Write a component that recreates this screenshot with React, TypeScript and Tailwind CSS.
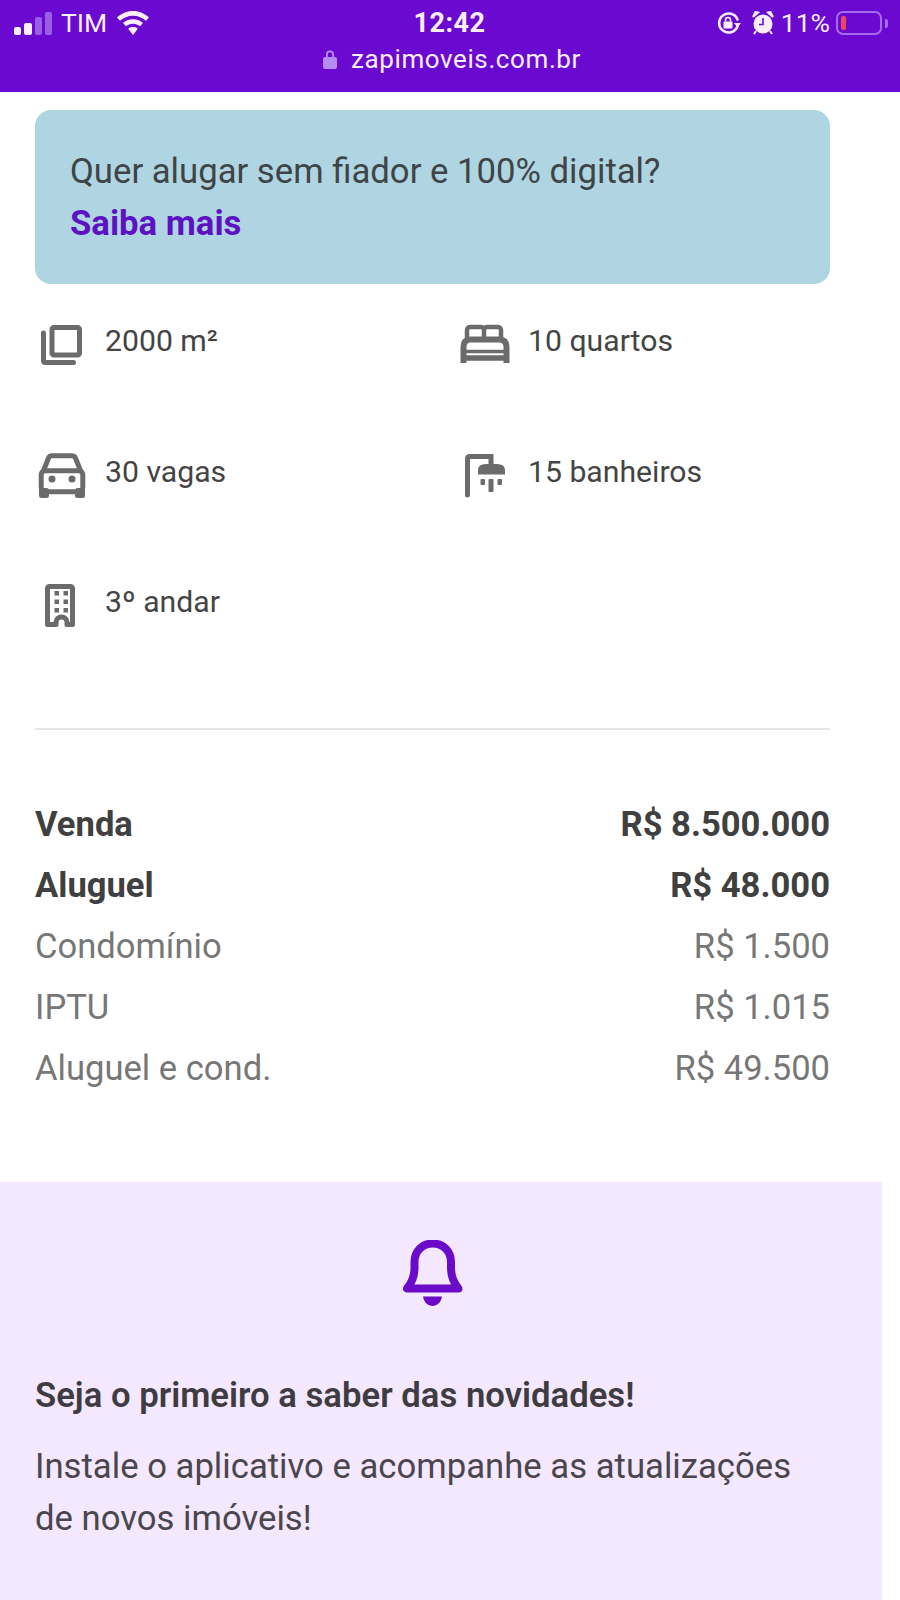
import React from "react";

const iconClass = "shrink-0 w-[56px] h-[56px] text-[#6b6b6b]";

const AreaIcon = () => (
  <svg viewBox="0 0 56 56" className={iconClass} fill="none" stroke="currentColor" strokeWidth="5" strokeLinecap="round" strokeLinejoin="round">
    <rect x="17" y="10.500" width="27.500" height="27.500" rx="2" />
    <path d="M8.500 16v27.500q0 2 2 2h28" />
  </svg>
);

const BedIcon = () => (
  <svg viewBox="0 0 56 56" className={iconClass} fill="none" stroke="currentColor">
    <path strokeWidth="4.500" d="M7 22V13a3 3 0 0 1 3-3h11a3 3 0 0 1 3 3v8M24 21v-8a3 3 0 0 1 3-3h11a3 3 0 0 1 3 3v9" />
    <path strokeWidth="6" d="M3.500 46V30q0-7.500 7-7.500h29q7 0 7 7.500v16" />
    <path strokeWidth="3.500" d="M3 34.500h44" />
    <path strokeWidth="5.500" d="M3 41h44" />
  </svg>
);

const CarIcon = () => (
  <svg viewBox="0 0 56 56" className={iconClass} fill="none" stroke="currentColor">
    <path strokeWidth="5" d="M8 24 13.500 10Q14.500 7.800 17 7.800H37Q39.500 7.800 40.500 10L46 24" />
    <rect x="6.200" y="22.700" width="41.600" height="21" rx="4" strokeWidth="5" />
    <rect x="4" y="40" width="10" height="10" rx="2.500" fill="currentColor" stroke="none" />
    <rect x="40" y="40" width="10" height="10" rx="2.500" fill="currentColor" stroke="none" />
    <circle cx="17" cy="31" r="3.500" fill="currentColor" stroke="none" />
    <circle cx="37" cy="31" r="3.500" fill="currentColor" stroke="none" />
  </svg>
);

const ShowerIcon = () => (
  <svg viewBox="0 0 56 56" className={iconClass} fill="none" stroke="currentColor">
    <path strokeWidth="5" strokeLinecap="round" d="M7.500 47V11Q7.500 8.500 10 8.500H31V17" />
    <path fill="currentColor" stroke="none" d="M18 26.500V22Q18 16 26 16H37Q45 16 45 22V26.500Z" />
    <rect x="20.500" y="31" width="4.500" height="6" rx="1" fill="currentColor" stroke="none" />
    <rect x="28.500" y="31" width="5" height="13" rx="1" fill="currentColor" stroke="none" />
    <rect x="37.500" y="31" width="4.500" height="6" rx="1" fill="currentColor" stroke="none" />
  </svg>
);

const BuildingIcon = () => (
  <svg viewBox="0 0 56 56" className={iconClass} fill="none" stroke="currentColor">
    <path strokeWidth="5" strokeLinejoin="round" d="M21 46.500H12.500V10.500a2 2 0 0 1 2-2H35.500a2 2 0 0 1 2 2v36h-5.500V44.500a5.500 5.500 0 0 0-11 0z" />
    <g fill="currentColor" stroke="none">
      <rect x="19.500" y="13" width="4.500" height="4.500" />
      <rect x="28.500" y="13" width="4.500" height="4.500" />
      <rect x="19.500" y="21.500" width="4.500" height="4.500" />
      <rect x="28.500" y="21.500" width="4.500" height="4.500" />
      <rect x="19.500" y="30" width="4.500" height="4.500" />
      <rect x="28.500" y="30" width="4.500" height="4.500" />
    </g>
  </svg>
);

const BellIcon = () => (
  <svg viewBox="0 0 60 67" className="w-[60px] h-[67px] text-[#6a0bca]">
    <path d="M4 48.500H55.500C50 42 48 36 48 28V22C48 11 40 3.500 29.750 3.500C19.500 3.500 11.500 11 11.500 22V28C11.500 36 9.500 42 4 48.500Z" fill="none" stroke="currentColor" strokeWidth="8" strokeLinejoin="round" />
    <path d="M20 56.500H39C38 62.500 34 66 29.500 66C25 66 21 62.500 20 56.500Z" fill="currentColor" />
  </svg>
);

const Feature = ({ icon, label, width }: { icon: React.ReactNode; label: string; width: string }) => (
  <div className="flex items-start h-[130.5px]">
    <div className={`${width} pt-px`}>{icon}</div>
    <span className="text-[30.2px] leading-[50px] text-[#444444]">{label}</span>
  </div>
);

const PriceRow = ({ label, value, strong }: { label: string; value: string; strong?: boolean }) => (
  <div className={`flex justify-between items-center h-[61px] text-[34.6px] ${strong ? "font-bold text-[#404040]" : "text-[#777777]"}`}>
    <span>{label}</span>
    <span>{value}</span>
  </div>
);

export default function App() {
  return (
    <div className="w-[900px] h-[1600px] overflow-hidden bg-white font-['Roboto',sans-serif]">
      <header className="h-[92px] bg-[#6a09d0] text-[#fbeefe]">
        <div className="h-[46px] grid grid-cols-[1fr_auto_1fr] items-center pl-[14px] pr-[12px]">
          <div className="flex items-center">
            <div className="flex items-end gap-[3px] h-[24px]">
              <div className="w-[7px] h-[8px] rounded-[2px] bg-[#fbeefe]" />
              <div className="w-[8px] h-[12px] rounded-[2px] bg-[#fbeefe]" />
              <div className="w-[7px] h-[18px] rounded-[2px] bg-[#9a5de6]" />
              <div className="w-[7px] h-[23px] rounded-[2px] bg-[#9a5de6]" />
            </div>
            <span className="ml-[9px] text-[26.5px] leading-none">TIM</span>
            <svg viewBox="0 0 32 24" className="ml-[10px] w-[32px] h-[24px]" fill="currentColor">
              <path d="M16 0C9.500 0 4.500 2.500 0 6.500l3 3.300C6.500 6.700 11 4.700 16 4.700s9.500 2 13 5.100l3-3.300C27.500 2.500 22.500 0 16 0z" />
              <path d="M16 8.200c-4.300 0-7.500 1.500-10 3.800l3 3.300c1.800-1.600 4-2.500 7-2.500s5.200.9 7 2.500l3-3.300c-2.500-2.300-5.700-3.800-10-3.800z" />
              <path d="M16 16c-2.200 0-3.800.7-4.800 1.700L16 24l4.800-6.300C19.800 16.700 18.200 16 16 16z" />
            </svg>
          </div>
          <span className="mr-[3px] text-[27px] font-bold leading-none tracking-[0.5px]">12:42</span>
          <div className="flex items-center justify-end">
            <svg viewBox="0 0 24 24" className="w-[24px] h-[24px]" fill="none" stroke="currentColor" strokeWidth="2.600">
              <path d="M20.500 15.500a9.500 9.500 0 1 1 0-7" strokeLinecap="round" />
              <path d="M24 12h-7l3.500 4.500z" fill="currentColor" stroke="none" />
              <rect x="6.500" y="10.500" width="9" height="7" rx="1" fill="currentColor" stroke="none" />
              <path d="M8.500 10.500V9a2.500 2.500 0 0 1 5 0v1.500" strokeWidth="1.600" />
            </svg>
            <svg viewBox="0 0 22 24" className="ml-[11px] w-[22px] h-[24px]" fill="currentColor">
              <circle cx="11" cy="13" r="9.500" />
              <path d="M1 6l5-4.500L3.500 1zM21 6l-5-4.500L18.500 1z" stroke="currentColor" strokeWidth="2" />
              <path d="M11 7v6.500H7" fill="none" stroke="#6a09d0" strokeWidth="1.600" />
              <path d="M4 20l-2 3M18 20l2 3" stroke="currentColor" strokeWidth="2" />
            </svg>
            <span className="ml-[7px] text-[26.5px] leading-none">11%</span>
            <div className="ml-[6px] flex items-center">
              <div className="w-[46px] h-[24px] rounded-[7px] border-2 border-[#a46cec] p-[3px]">
                <div className="w-[5px] h-full rounded-[2px] bg-[#f0445f]" />
              </div>
              <div className="ml-[3px] w-[3px] h-[9px] rounded-r-[2px] bg-[#a46cec]" />
            </div>
          </div>
        </div>
        <div className="flex items-center justify-center pl-[4px]">
          <svg viewBox="0 0 14 20" className="w-[14px] h-[20px] text-[#b78cf0]" fill="currentColor">
            <path d="M3 9V5.500a4 4 0 0 1 8 0V9h-1.800V5.500a2.200 2.200 0 0 0-4.400 0V9z" />
            <rect x="0" y="8" width="14" height="12" rx="2" />
          </svg>
          <span className="ml-[14px] text-[26px] leading-[26px] tracking-[0.6px]">zapimoveis.com.br</span>
        </div>
      </header>

      <main className="w-[882px]">
        <div className="px-[35px] pt-[18px]">
          <div className="w-[795px] h-[174px] rounded-[16px] bg-[#b0d5e2] px-[35px] pt-[35px]">
            <p className="text-[34.7px] leading-[52px] text-[#3f4446]">Quer alugar sem fiador e 100% digital?</p>
            <p className="text-[34.7px] leading-[52px] font-bold text-[#5c12c2]">Saiba mais</p>
          </div>

          <div className="mt-[32px] grid grid-cols-[425px_1fr]">
            <Feature icon={<AreaIcon />} label="2000 m²" width="w-[70px]" />
            <Feature icon={<BedIcon />} label="10 quartos" width="w-[68px]" />
            <Feature icon={<CarIcon />} label="30 vagas" width="w-[70px]" />
            <Feature icon={<ShowerIcon />} label="15 banheiros" width="w-[68px]" />
            <Feature icon={<BuildingIcon />} label="3º andar" width="w-[70px]" />
          </div>

          <div className="mt-[20px] h-[2px] w-[795px] bg-[#e6e6e6]" />

          <div className="mt-[65px] w-[795px]">
            <PriceRow label="Venda" value="R$ 8.500.000" strong />
            <PriceRow label="Aluguel" value="R$ 48.000" strong />
            <PriceRow label="Condomínio" value="R$ 1.500" />
            <PriceRow label="IPTU" value="R$ 1.015" />
            <PriceRow label="Aluguel e cond." value="R$ 49.500" />
          </div>
        </div>

        <section className="mt-[82px] h-[420px] bg-[#f3e8fd] px-[35px] pt-[58px]">
          <div className="w-[795px] flex justify-center">
            <BellIcon />
          </div>
          <h2 className="mt-[62px] text-[34.7px] leading-[52px] font-semibold text-[#3f3b42]">Seja o primeiro a saber das novidades!</h2>
          <p className="mt-[19px] text-[34.7px] leading-[52px] text-[#4a464d]">
            Instale o aplicativo e acompanhe as atualizações
            <br />
            de novos imóveis!
          </p>
        </section>
      </main>
    </div>
  );
}
